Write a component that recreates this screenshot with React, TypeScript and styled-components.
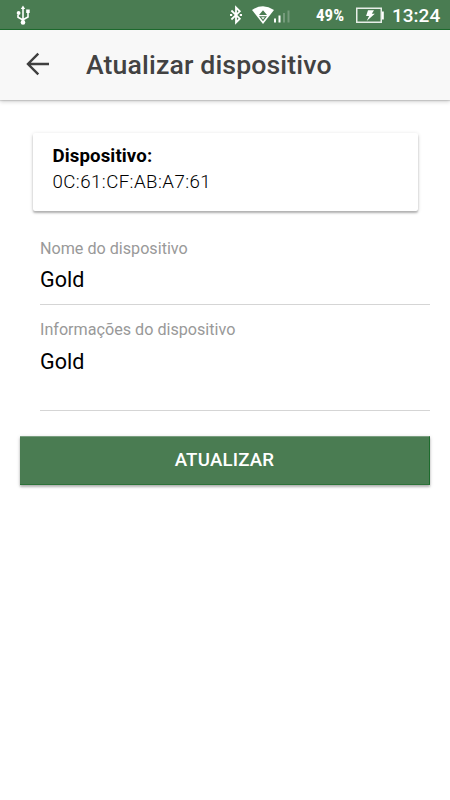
import React from "react";
import styled, { createGlobalStyle } from "styled-components";

const GlobalStyle = createGlobalStyle`
  * { box-sizing: border-box; }
  body { margin: 0; background: #fff; font-family: Roboto, sans-serif; color: #000; }
`;

const Screen = styled.div`
  width: 450px;
  height: 800px;
  background: #fff;
  overflow: hidden;
`;

const StatusBar = styled.div`
  display: flex;
  align-items: center;
  height: 30px;
  padding: 1px 10px 0 15px;
  background: #4a7c52;
  border-bottom: 1px solid #1d6b2d;
  color: #fff;
  svg { display: block; flex: none; }
`;

const Indicators = styled.div`
  display: flex;
  align-items: center;
  margin-left: auto;
`;

const Percent = styled.span`
  width: 28px;
  margin: 0 12px 0 26px;
  font: 700 17px/20px "Roboto Condensed", Roboto, sans-serif;
  white-space: nowrap;
`;

const Clock = styled.span`
  width: 48px;
  margin: 1px 0 0 8px;
  font-size: 19px;
  font-weight: 500;
  line-height: 24px;
  white-space: nowrap;
`;

const Header = styled.header`
  display: flex;
  align-items: center;
  height: 70px;
  padding-left: 26px;
  background: #f8f8f8;
  box-shadow: 0 1px 1px rgba(0, 0, 0, 0.12), 0 2px 4px rgba(0, 0, 0, 0.16);
`;

const BackButton = styled.button`
  width: 24px;
  height: 24px;
  padding: 0;
  margin-top: -2px;
  border: 0;
  background: none;
  svg { display: block; }
`;

const Title = styled.h1`
  margin: 0 0 0 36px;
  font-size: 26.67px;
  font-weight: 500;
  line-height: 32px;
  letter-spacing: 0.13px;
  color: #424242;
  white-space: nowrap;
`;

const Content = styled.main`
  display: flex;
  flex-direction: column;
  padding: 33px 20px 0;
`;

const DeviceCard = styled.section`
  height: 78px;
  margin: 0 12.5px;
  padding: 11px 20px;
  border-radius: 2px;
  background: #fff;
  box-shadow: 0 2px 2px rgba(0, 0, 0, 0.24), 0 1px 4px rgba(0, 0, 0, 0.14);
  font-size: 18.67px;
  line-height: 25px;
`;

const DeviceLabel = styled.div`
  font-size: 18.67px;
  letter-spacing: 0.1px;
  line-height: 24px;
  font-weight: 700;
`;

const DeviceAddress = styled.div`
  margin-top: 1px;
  line-height: 26px;
  font-weight: 300;
  letter-spacing: 0.44px;
`;

const Fields = styled.div`
  display: flex;
  flex-direction: column;
  padding-top: 27px;
  gap: 15px;
`;

const Field = styled.div<{ $height: number; $inset: number }>`
  height: ${(p) => p.$height}px;
  margin-left: 20px;
  padding-top: ${(p) => p.$inset}px;
  border-bottom: 1px solid #d5d5d5;
`;

const FieldLabel = styled.span`
  display: block;
  font-size: 16.15px;
  line-height: 20px;
  color: #999;
`;

const FieldValue = styled.span<{ $gap: number }>`
  display: block;
  margin-top: ${(p) => p.$gap}px;
  font-size: 21.5px;
  line-height: 28px;
`;

const UpdateButton = styled.button`
  height: 49px;
  margin-top: 25px;
  padding: 0 0 2px;
  border: 0;
  border-right: 1px solid #1d6b2d;
  border-bottom: 1px solid #2c7339;
  border-top: 1px solid #799e7f;
  background: #4a7c52;
  box-shadow: 0 2px 2px rgba(0, 0, 0, 0.22), 0 1px 4px rgba(0, 0, 0, 0.16);
  color: #fff;
  font: 500 18.67px/24px Roboto, sans-serif;
  letter-spacing: 0.2px;
`;

const UsbIcon = () => (
  <svg width="16" height="22" viewBox="0 0 16 22" fill="none" stroke="#fff" strokeWidth="1.6">
    <path d="M8 3v16M3 11v2.3L8 16M13 9v4L8 15.7" />
    <path d="M8 1.5 5.8 5h4.4zM11.2 5.5h3.5V9h-3.5z" fill="#fff" stroke="none" />
    <circle cx="3.6" cy="9" r="1.9" fill="#fff" stroke="none" />
    <circle cx="8" cy="18.4" r="2.3" fill="#fff" stroke="none" />
  </svg>
);

const BluetoothIcon = () => (
  <svg width="12" height="20" viewBox="0 0 12 20" fill="none" stroke="#fff" strokeWidth="1.8">
    <path d="m1.4 5.5 8.4 8.2L6 17.5V2.5l3.8 3.8-8.4 8.2" />
    <path d="M0 9h2.2v2H0zM9.8 9H12v2H9.8z" fill="#fff" stroke="none" />
  </svg>
);

const WifiIcon = () => (
  <svg width="22" height="19" viewBox="0 0 22 19">
    <path d="M0 4Q11-3.4 22 4L11 18z" fill="#fff" />
    <path d="m11 4.3 4 4.7H7zM7 10.2h8l-4 5z" fill="#4a7c52" />
    <path d="M9.2 11.2h3.6L11 13.5z" fill="#fff" />
  </svg>
);

const SignalIcon = () => (
  <svg width="16" height="14" viewBox="0 0 16 14" fill="#fff">
    <path d="M0 8.5h2v4H0zM4.5 5.5h2v7h-2z" />
    <path d="M9 3h2v9.5H9zM13.5.5h2v12h-2z" opacity=".24" />
  </svg>
);

const BatteryIcon = () => (
  <svg width="28" height="17" viewBox="0 0 28 17">
    <path d="M.75 1.25h24.5v14H.75z" fill="none" stroke="#e7eee8" strokeWidth="1.5" />
    <path d="M26 4.5h1.8v8H26zM12 3.2h6l-2.2 3.5h3L10.7 14l2.4-5h-3z" fill="#fff" />
  </svg>
);

const ArrowIcon = () => (
  <svg width="24" height="24" viewBox="0 0 24 24" fill="none" stroke="#3f3f3f" strokeWidth="2.4">
    <path d="M12.3 1.7 2 12l10.3 10.3M2 12h21" />
  </svg>
);

const Signals = styled.div`
  display: flex;
  align-items: center;
  svg + svg { margin-left: 10px; }
  svg + svg + svg { margin: 3px 0 0; }
`;

const fields = [
  { label: "Nome do dispositivo", value: "Gold", height: 67, inset: 1, gap: 7 },
  { label: "Informações do dispositivo", value: "Gold", height: 91, inset: 0, gap: 8 },
];

export default function App() {
  return (
    <Screen>
      <GlobalStyle />
      <StatusBar>
        <UsbIcon />
        <Indicators>
          <Signals>
            <BluetoothIcon />
            <WifiIcon />
            <SignalIcon />
          </Signals>
          <Percent>49%</Percent>
          <BatteryIcon />
          <Clock>13:24</Clock>
        </Indicators>
      </StatusBar>
      <Header>
        <BackButton aria-label="Voltar"><ArrowIcon /></BackButton>
        <Title>Atualizar dispositivo</Title>
      </Header>
      <Content>
        <DeviceCard>
          <DeviceLabel>Dispositivo:</DeviceLabel>
          <DeviceAddress>0C:61:CF:AB:A7:61</DeviceAddress>
        </DeviceCard>
        <Fields>
          {fields.map((f) => (
            <Field key={f.label} $height={f.height} $inset={f.inset}>
              <FieldLabel>{f.label}</FieldLabel>
              <FieldValue $gap={f.gap}>{f.value}</FieldValue>
            </Field>
          ))}
        </Fields>
        <UpdateButton>ATUALIZAR</UpdateButton>
      </Content>
    </Screen>
  );
}
